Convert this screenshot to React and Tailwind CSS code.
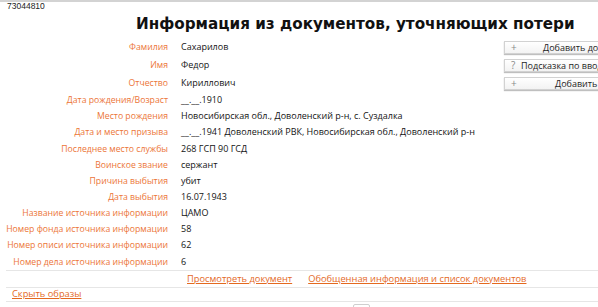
import React from "react";

const rows = [
  ["Фамилия", "Сахарилов"],
  ["Имя", "Федор"],
  ["Отчество", "Кириллович"],
  ["Дата рождения/Возраст", "__.__.1910"],
  ["Место рождения", "Новосибирская обл., Доволенский р-н, с. Суздалка"],
  ["Дата и место призыва", "__.__.1941 Доволенский РВК, Новосибирская обл., Доволенский р-н"],
  ["Последнее место службы", "268 ГСП 90 ГСД"],
  ["Воинское звание", "сержант"],
  ["Причина выбытия", "убит"],
  ["Дата выбытия", "16.07.1943"],
  ["Название источника информации", "ЦАМО"],
  ["Номер фонда источника информации", "58"],
  ["Номер описи источника информации", "62"],
  ["Номер дела источника информации", "6"],
];

const buttons = [
  ["+", "Добавить донесение", "pl-[38px]"],
  ["?", "Подсказка по вводу данных", "pl-[16px]"],
  ["+", "Добавить фотографию", "pl-[50px]"],
];

function Btn({ icon, text, pad }) {
  return (
    <div className="relative h-[13px] w-[200px] border border-[#d2d2d2] bg-gradient-to-b from-white to-[#f3f3f3] shadow-[0_1px_1px_rgba(0,0,0,0.25)] whitespace-nowrap">
      <span className="absolute left-[6px] top-0 text-[10px] leading-[11px] text-[#8a8a8a]">{icon}</span>
      <span className={"block text-[9px] leading-[11px] font-medium text-[#1e1e1e] " + pad}>{text}</span>
    </div>
  );
}

export default function App() {
  return (
    <div
      className="w-[598px] h-[307px] overflow-hidden bg-white border-t-2 border-[#d3d3d3]"
      style={{ fontFamily: '"Open Sans", sans-serif' }}
    >
      <div className="h-[9px] pl-[7px] text-[8.5px] leading-[9px] text-[#222]" style={{ fontFamily: '"Liberation Sans", Arial, sans-serif' }}>
        73044810
      </div>
      <div
        className="h-[27px] pl-[136px] text-[15.2px] leading-[27px] font-bold text-[#111] whitespace-nowrap"
        style={{ fontFamily: '"DejaVu Sans", Verdana, sans-serif' }}
      >
        Информация из документов, уточняющих потери
      </div>
      <div className="flex">
        <div className="w-[504px] shrink-0">
          {rows.map(([l, v], i) => (
            <div key={i} className={"flex items-center " + (i < 3 ? "h-[18px]" : "h-[16.17px]")}>
              <div className="w-[168px] shrink-0 text-right text-[8.7px] leading-[12px] text-[#ec7538] whitespace-nowrap">{l}</div>
              <div className="pl-[13px] text-[9px] leading-[12px] font-medium text-[#141414] whitespace-nowrap">{v}</div>
            </div>
          ))}
        </div>
        <div className="flex flex-col">
          {buttons.map(([ic, t, p], i) => (
            <div key={i} className="h-[18px] flex items-center">
              <Btn icon={ic} text={t} pad={p} />
            </div>
          ))}
        </div>
      </div>
      <div className="ml-[6px] border-t border-[#e6e6e6] h-[17px] flex items-center gap-[16px] pl-[181px] text-[9.3px] leading-[12px] whitespace-nowrap">
        <a className="text-[#e4691f] underline">Просмотреть документ</a>
        <a className="text-[#e4691f] underline">Обобщенная информация и список документов</a>
      </div>
      <div className="ml-[6px] border-t border-b border-[#e6e6e6] h-[15px] flex items-center pl-[6px] text-[9.3px] leading-[12px]">
        <a className="text-[#e4691f] underline">Скрыть образы</a>
      </div>
      <div className="pl-[353px]">
        <div className="mt-[2px] w-[17px] h-[10px] border border-[#cfcfcf] rounded-t-[2px]" />
      </div>
    </div>
  );
}
